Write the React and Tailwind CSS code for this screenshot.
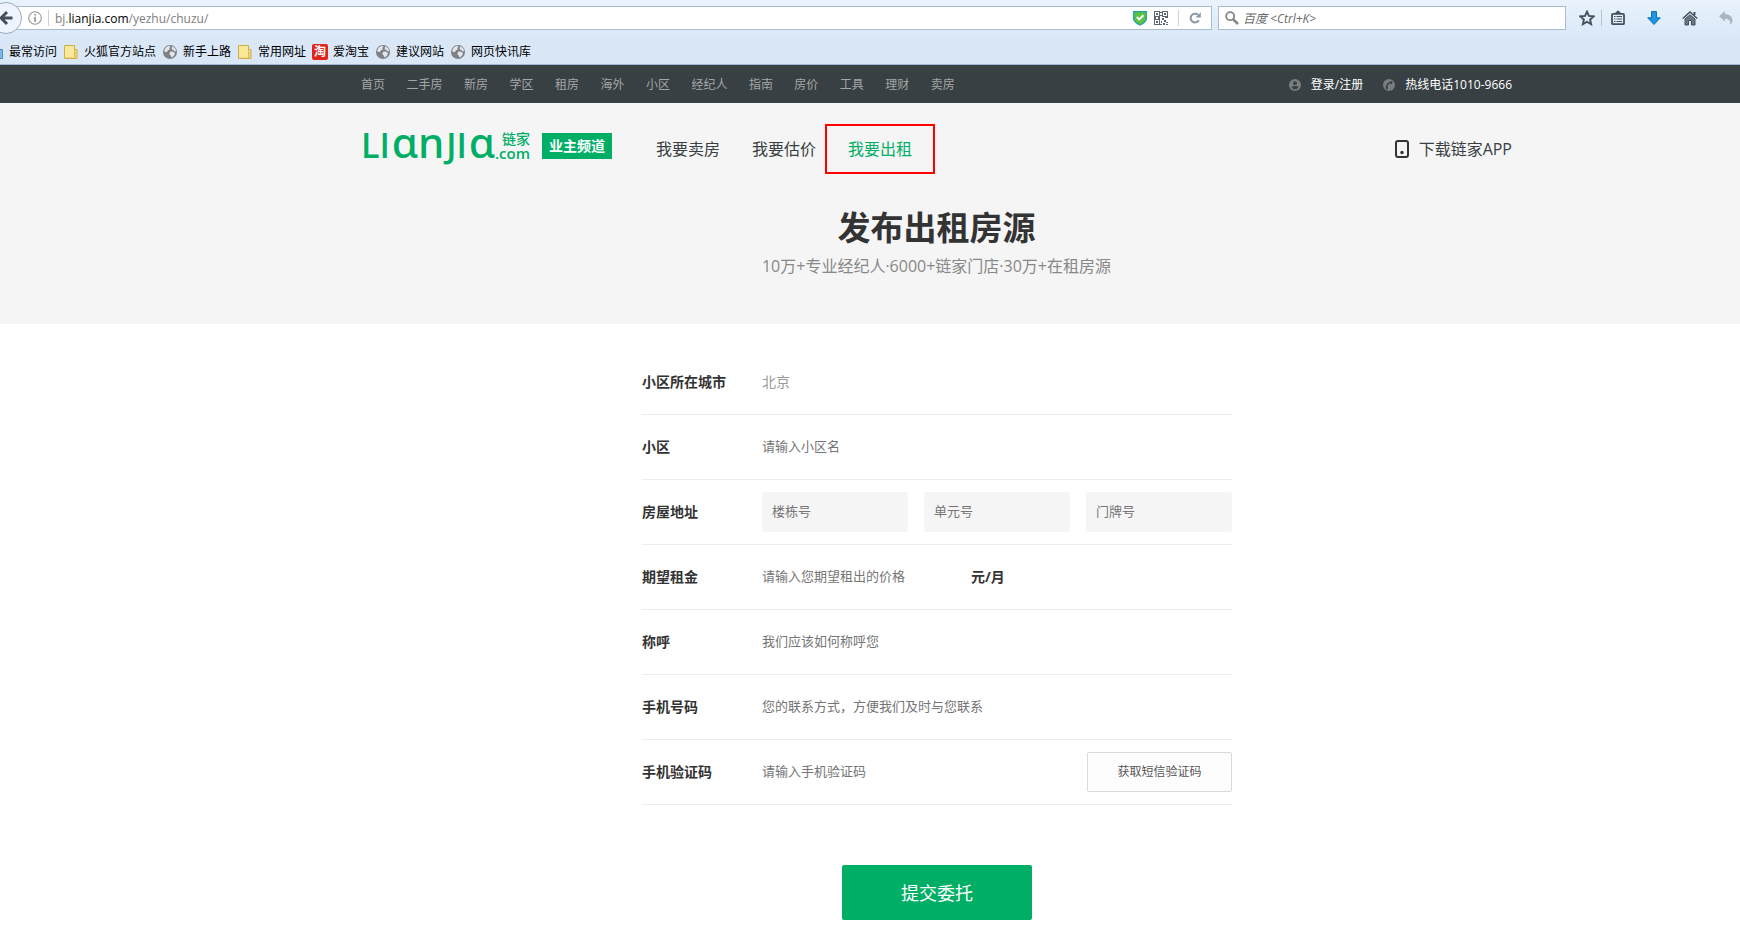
import { useState } from 'react'

const BOOKMARKS = [
  { label: '最常访问', icon: 'recent' },
  { label: '火狐官方站点', icon: 'folder' },
  { label: '新手上路', icon: 'globe' },
  { label: '常用网址', icon: 'folder' },
  { label: '爱淘宝', icon: 'taobao' },
  { label: '建议网站', icon: 'globe' },
  { label: '网页快讯库', icon: 'globe' },
]

const SITE_NAV = ['首页', '二手房', '新房', '学区', '租房', '海外', '小区', '经纪人', '指南', '房价', '工具', '理财', '卖房']

const INITIAL = { community: '', building: '', unit: '', room: '', rent: '', name: '', phone: '', code: '' }

function BookmarkIcon({ type }) {
  if (type === 'taobao') {
    return (
      <span className="flex h-4 w-4 items-center justify-center rounded-xs bg-[#e1251b] text-xs leading-4 font-bold text-white">
        淘
      </span>
    )
  }
  if (type === 'globe') {
    return (
      <svg className="h-4 w-4" viewBox="0 0 16 16">
        <circle cx="8" cy="8" r="7" fill="#7d8084" />
        <path d="M2 6.500 4 3.200l3-1.400 1.500 1-1.300 1.400.6 1.300-2.300 1-.4 1.800-2-.6zM10 2.200l3 1.800 1.200 3-1.700.4-1.200-1.600-1.600-.4zM8 7.800l2.600-.4 2.400 1.600-.8 2.600-2.400 2.200-1-2.400-1.400-.8z" fill="#e3e6ea" />
      </svg>
    )
  }
  if (type === 'folder') {
    return (
      <svg className="h-4 w-4" viewBox="0 0 16 16">
        <path d="M1.500 1.500h10v4h2.500v9H1.500z" fill="#f0d878" stroke="#cfae48" />
        <path d="M2 2h9v11H2z" fill="#f8e899" />
        <path d="M11.500 6.500v8" stroke="#d8b956" />
      </svg>
    )
  }
  return (
    <svg className="h-4 w-4" viewBox="0 0 16 16">
      <path d="M1.500 1.500h10v4h3v9h-13z" fill="#7db9de" stroke="#4a8db8" />
    </svg>
  )
}

function ShieldIcon() {
  return (
    <svg className="h-4 w-4" viewBox="0 0 16 16">
      <path d="M1 1h14v7c0 3.500-3 6-7 7.800C4 14 1 11.500 1 8z" fill="#2aa7a0" />
      <path d="M2.500 2.500h11V8c0 2.700-2.300 4.700-5.500 6.100C4.800 12.700 2.500 10.700 2.500 8z" fill="#5cc43c" />
      <path d="m4.800 7 2.400 2.400 4.200-4.200" fill="none" stroke="#fff" strokeWidth="2" />
    </svg>
  )
}

function QrIcon() {
  return (
    <svg className="h-3.5 w-3.5" viewBox="0 0 14 14" shapeRendering="crispEdges">
      <path d="M.5.5h5v5h-5zM8.500.5h5v5h-5zM.5 8.500h5v5h-5z" fill="none" stroke="#5b6673" />
      <path d="M2 2h2v2H2zM10 2h2v2h-2zM2 10h2v2H2zM6 1h2v1H6zM6 4h2v1H6zM0 6h2v2H0zM4 6h2v2H4zM8 7h2v2H8zM11 6h3v1h-3zM7 10h1v2H7zM10 9h2v2h-2zM12 11h2v1h-2zM9 12h2v2H9zM12 13h2v1h-2zM6 13h2v1H6z" fill="#5b6673" />
    </svg>
  )
}

function BrowserBar() {
  return (
    <header className="overflow-hidden border-b border-[#9fb6d0] bg-linear-to-b from-[#e9f3fc] to-[#d9e7f7] to-60%">
      <div className="flex h-9 items-center">
        <div className="relative flex h-6 flex-1 items-center border border-l-0 border-[#a9bccd] bg-white pr-2.5 pl-7">
          <button
            type="button"
            aria-label="后退"
            className="absolute -top-[5px] -left-2.5 flex h-8 w-8 items-center justify-center rounded-full border border-[#98aec4] bg-[#edf4fb]"
          >
            <svg className="h-4 w-4" viewBox="0 0 16 16" fill="none" stroke="#45505c" strokeWidth="3">
              <path d="M14.500 8H4M9 2 3 8l6 6" />
            </svg>
          </button>
          <svg className="h-3.5 w-3.5 shrink-0" viewBox="0 0 14 14">
            <circle cx="7" cy="7" r="6.300" fill="none" stroke="#969696" strokeWidth="1.100" />
            <path d="M6.200 3h1.700v1.600H6.200zM6.200 5.800h1.700V11H6.200z" fill="#969696" />
          </svg>
          <span className="ml-1.5 h-4 w-px bg-[#cfcfcf]" />
          <span className="ml-1.5 flex-1 pt-0.5 text-xs text-[#808080]">
            bj.<span className="text-black">lianjia.com</span>/yezhu/chuzu/
          </span>
          <ShieldIcon />
          <span className="ml-1.5 flex">
            <QrIcon />
          </span>
          <span className="ml-2.5 h-4 w-px bg-[#cfd4da]" />
          <button type="button" aria-label="刷新" className="ml-2.5">
            <svg className="h-3 w-3" viewBox="0 0 12 12">
              <path d="M9.800 8.300A4.400 4.400 0 1 1 9 2.800" fill="none" stroke="#8b97a5" strokeWidth="2" />
              <path d="M11.800.2v5.300H6.500z" fill="#8b97a5" />
            </svg>
          </button>
        </div>
        <label className="ml-1.5 flex h-6 w-[348px] items-center border border-[#a9bccd] bg-white pl-1.5">
          <svg className="h-3.5 w-3.5 shrink-0" viewBox="0 0 14 14" fill="none" stroke="#858585">
            <circle cx="5.200" cy="5.200" r="4" strokeWidth="1.800" />
            <path d="m8.300 8.300 4.700 4.700" strokeWidth="2.600" />
          </svg>
          <input
            type="text"
            aria-label="搜索"
            placeholder="百度 <Ctrl+K>"
            className="ml-1 w-full pt-0.5 text-xs outline-none placeholder:text-[#6b6b6b] placeholder:italic"
          />
        </label>
        <div className="flex items-center pr-1.5 pl-[13px]">
          <button type="button" aria-label="收藏">
            <svg className="h-4 w-4" viewBox="0 0 16 16" fill="none" stroke="#45505c" strokeWidth="1.900">
              <path d="m8 1.600 1.900 4.300 4.700.5-3.500 3.100 1 4.700L8 11.800l-4.100 2.400 1-4.700L1.400 6.400l4.700-.5z" />
            </svg>
          </button>
          <span className="ml-1.5 h-4 w-px bg-[#b5c3d1]" />
          <button type="button" aria-label="书签" className="ml-2">
            <svg className="h-4 w-4" viewBox="0 0 16 16" fill="none" stroke="#45505c">
              <rect x="2" y="3.800" width="12" height="10.400" rx="1" strokeWidth="1.800" />
              <path d="M5 3.500 8 .8l3 2.700z" fill="#45505c" />
              <path d="M4 6.500h1.500M6.500 6.500H12M4 9h1.500M6.500 9H12M4 11.500h1.500M6.500 11.500H12" strokeWidth="1" />
            </svg>
          </button>
          <button type="button" aria-label="下载" className="ml-5">
            <svg className="h-4 w-4" viewBox="0 0 16 16">
              <path d="M5.500 1.500h5v6.300h3.800L8 14.500 1.700 7.800h3.800z" fill="#1b95e0" stroke="#0b71b4" />
            </svg>
          </button>
          <button type="button" aria-label="主页" className="ml-5">
            <svg className="h-4 w-4" viewBox="0 0 16 16">
              <path d="M3 9 8 4.800 13 9v6H9.500v-4.500h-3V15H3z" fill="#6d7780" stroke="#45505c" />
              <path d="M.8 8.500 8 2l7.200 6.500" fill="none" stroke="#45505c" strokeWidth="1.600" />
              <path d="M11.500 2h2v3h-2z" fill="#45505c" />
            </svg>
          </button>
          <button type="button" aria-label="撤销" className="ml-5">
            <svg className="h-4 w-4" viewBox="0 0 16 16">
              <path d="M1 6.300 7 1v3.300c4.600 0 7.500 2.700 7.500 6 0 2-1 3.500-2.500 4.500.8-3.800-.8-6-5-6v2.800z" fill="#a9b5c1" />
            </svg>
          </button>
        </div>
      </div>
      <nav className="-ml-3 flex h-7 items-center gap-1.5 pt-1 text-xs text-black">
        {BOOKMARKS.map((b) => (
          <a key={b.label} href="#" className="flex shrink-0 items-center gap-[5px]">
            <BookmarkIcon type={b.icon} />
            {b.label}
          </a>
        ))}
      </nav>
    </header>
  )
}

function TopNav() {
  return (
    <div className="bg-[#394043] pl-[133px] text-xs">
      <div className="mx-auto flex h-[38px] max-w-[1151px] items-center justify-between pt-0.5">
        <nav className="flex w-[594px] justify-between text-[#a3a6a7]">
          {SITE_NAV.map((item) => (
            <a key={item} href="#">{item}</a>
          ))}
        </nav>
        <div className="flex items-center gap-5 text-white">
          <a href="#" className="flex items-center gap-2.5">
            <svg className="h-3 w-3" viewBox="0 0 12 12">
              <circle cx="6" cy="6" r="6" fill="#797d7f" />
              <circle cx="6" cy="4.200" r="1.900" fill="#394043" />
              <path d="M2.500 8c1.400-1.200 5.600-1.200 7 0-.8 1.700-2 2.300-3.500 2.300S3.300 9.700 2.500 8z" fill="#394043" />
            </svg>
            登录/注册
          </a>
          <span className="flex items-center gap-2.5">
            <svg className="h-3 w-3" viewBox="0 0 12 12">
              <circle cx="6" cy="6" r="6" fill="#797d7f" />
              <path d="M3.700 9.600C3.200 6 5 3.600 8.700 3.300" fill="none" stroke="#394043" strokeWidth="1.400" />
              <path d="m7 2.200 2.600.4-.6 2.600-1.800-.4zM2.600 7.400l2.200.2.200 2.200-2 .6z" fill="#394043" />
            </svg>
            热线电话1010-9666
          </span>
        </div>
      </div>
    </div>
  )
}

function Logo() {
  return (
    <a href="#" className="flex h-11 items-center text-[#00ae66]">
      <span className="flex items-baseline gap-0.5 self-start font-['Open_Sans','Noto_Sans',sans-serif] text-[34px] leading-9 font-semibold">
        <span>LI</span>
        <span className="font-['Noto_Sans',sans-serif] text-[42px] leading-9 font-medium">ɑn</span>
        <span>JI</span>
        <span className="font-['Noto_Sans',sans-serif] text-[42px] leading-9 font-medium">ɑ</span>
      </span>
      <span className="flex flex-col items-end">
        <span className="text-sm leading-[14px] font-medium">链家</span>
        <span className="text-[15px] leading-[14px] font-semibold">.com</span>
      </span>
      <span className="ml-3 flex h-[26px] items-center bg-[#00ae66] px-[7px] text-sm font-bold text-white">业主频道</span>
    </a>
  )
}

function Hero() {
  return (
    <section className="bg-[#f5f5f5] pt-[21px] pb-[42px] pl-[133px]">
      <div className="mx-auto flex h-[50px] max-w-[1151px] items-center text-base text-[#394043]">
        <div className="self-start">
          <Logo />
        </div>
        <nav className="ml-11 flex gap-8">
          <a href="#">我要卖房</a>
          <a href="#">我要估价</a>
          <a href="#" className="relative text-[#00ae66]">
            我要出租
            <span className="absolute -inset-x-[23px] -inset-y-[13px] border-2 border-[#f00]" />
          </a>
        </nav>
        <a href="#" className="ml-auto flex items-center gap-2.5">
          <svg className="h-[18px] w-3.5" viewBox="0 0 14 18">
            <rect x="1" y="1" width="12" height="16" rx="2" fill="none" stroke="#333" strokeWidth="2" />
            <circle cx="7" cy="12.500" r="1.700" fill="#333" />
          </svg>
          下载链家APP
        </a>
      </div>
      <h1 className="mt-8 text-center text-[33px] leading-[44px] font-bold text-[#333]">发布出租房源</h1>
      <p className="text-center text-base leading-8 text-[#888]">10万+专业经纪人·6000+链家门店·30万+在租房源</p>
    </section>
  )
}

function Row({ label, htmlFor, children }) {
  return (
    <div className="flex h-[65px] items-center border-b border-[#ededed]">
      <label htmlFor={htmlFor} className="w-[120px] shrink-0 text-sm font-bold text-[#333]">{label}</label>
      {children}
    </div>
  )
}

const inputClass = 'h-10 min-w-0 flex-1 pb-0.5 text-[13px] text-[#333] outline-none placeholder:text-[#757575]'
const boxClass = 'h-10 w-full min-w-0 rounded-xs bg-[#f5f5f5] px-2.5 pb-0.5 text-[13px] text-[#333] outline-none placeholder:text-[#757575]'

function RentForm() {
  const [form, setForm] = useState(INITIAL)

  function bind(field) {
    return {
      id: field,
      value: form[field],
      onChange: (e) => setForm((f) => ({ ...f, [field]: e.target.value })),
    }
  }

  return (
    <main className="pt-[26px] pb-5 pl-[134px]">
      <form className="mx-auto max-w-[590px]" onSubmit={(e) => e.preventDefault()}>
        <Row label="小区所在城市" htmlFor="city">
          <input id="city" type="text" readOnly value="北京" className="h-10 flex-1 pb-0.5 text-sm text-[#999] outline-none" />
        </Row>
        <Row label="小区" htmlFor="community">
          <input type="text" placeholder="请输入小区名" className={inputClass} {...bind('community')} />
        </Row>
        <Row label="房屋地址" htmlFor="building">
          <div className="grid flex-1 grid-cols-3 gap-4">
            <input type="text" placeholder="楼栋号" className={boxClass} {...bind('building')} />
            <input type="text" aria-label="单元号" placeholder="单元号" className={boxClass} {...bind('unit')} />
            <input type="text" aria-label="门牌号" placeholder="门牌号" className={boxClass} {...bind('room')} />
          </div>
        </Row>
        <Row label="期望租金" htmlFor="rent">
          <input type="text" placeholder="请输入您期望租出的价格" className={inputClass} {...bind('rent')} />
          <span className="w-[261px] text-sm font-bold text-[#333]">元/月</span>
        </Row>
        <Row label="称呼" htmlFor="name">
          <input type="text" placeholder="我们应该如何称呼您" className={inputClass} {...bind('name')} />
        </Row>
        <Row label="手机号码" htmlFor="phone">
          <input type="tel" placeholder="您的联系方式，方便我们及时与您联系" className={inputClass} {...bind('phone')} />
        </Row>
        <Row label="手机验证码" htmlFor="code">
          <input type="text" placeholder="请输入手机验证码" className={inputClass} {...bind('code')} />
          <button type="button" className="h-10 w-[145px] rounded-xs border border-[#dadada] bg-[#fdfdfd] text-xs text-[#555]">
            获取短信验证码
          </button>
        </Row>
        <button type="submit" className="mx-auto mt-[60px] block h-[55px] w-[190px] rounded-xs bg-[#00ae66] text-lg text-white">
          提交委托
        </button>
      </form>
    </main>
  )
}

export default function App() {
  return (
    <div className="min-h-screen bg-white font-['Open_Sans','Noto_Sans_CJK_SC',sans-serif]">
      <BrowserBar />
      <TopNav />
      <Hero />
      <RentForm />
    </div>
  )
}
